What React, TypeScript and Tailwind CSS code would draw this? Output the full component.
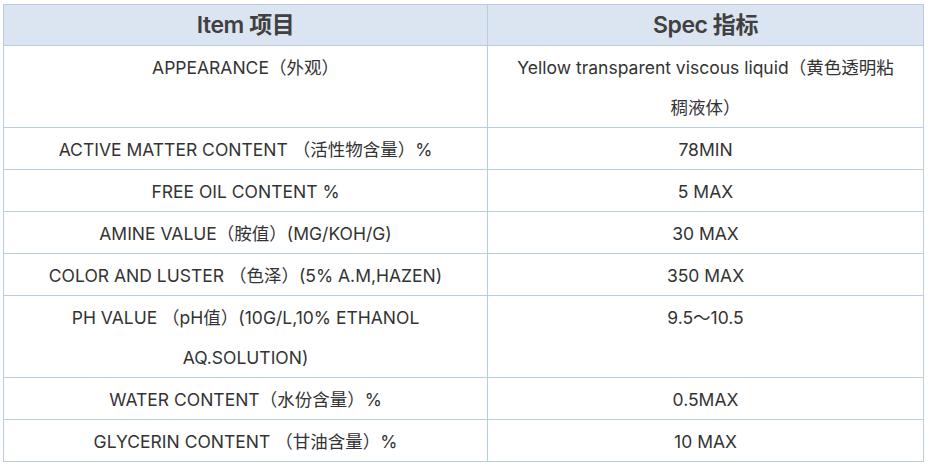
const rows: { item: React.ReactNode; spec: React.ReactNode }[] = [
  {
    item: "APPEARANCE（外观）",
    spec: (
      <>
        Yellow transparent viscous liquid（黄色透明粘
        <br />
        稠液体）
      </>
    ),
  },
  { item: "ACTIVE MATTER CONTENT （活性物含量）%", spec: "78MIN" },
  { item: "FREE OIL CONTENT %", spec: "5 MAX" },
  { item: "AMINE VALUE（胺值）(MG/KOH/G)", spec: "30 MAX" },
  { item: "COLOR AND LUSTER （色泽）(5% A.M,HAZEN)", spec: "350 MAX" },
  {
    item: (
      <>
        PH VALUE （pH值）(10G/L,10% ETHANOL
        <br />
        AQ.SOLUTION)
      </>
    ),
    spec: "9.5～10.5",
  },
  { item: "WATER CONTENT（水份含量）%", spec: "0.5MAX" },
  { item: "GLYCERIN CONTENT （甘油含量）%", spec: "10 MAX" },
];

export default function App() {
  return (
    <div className="h-[467px] w-[929px] overflow-hidden bg-white pl-[3px] pt-[4px] font-['Inter','Noto_Sans_CJK_SC',sans-serif] text-[#333]">
      <table className="w-[921px] table-fixed border-collapse">
        <colgroup>
          <col className="w-[484px]" />
          <col />
        </colgroup>
        <thead>
          <tr className="bg-[#dbe5f1]">
            <th className="h-[41px] border border-[#b8cce4] p-0 text-center align-middle text-[23px] font-semibold leading-[40px] tracking-[-0.02em] text-[#404040]">
              Item 项目
            </th>
            <th className="h-[41px] border border-[#b8cce4] p-0 text-center align-middle text-[23px] font-semibold leading-[40px] tracking-[-0.02em] text-[#404040]">
              Spec 指标
            </th>
          </tr>
        </thead>
        <tbody>
          {rows.map((r, i) => (
            <tr key={i}>
              <td className="border border-[#b8cce4] px-2 pt-[1px] pb-0 text-center align-top text-[17.5px] leading-[40px]">
                <span className="relative top-[1px]">{r.item}</span>
              </td>
              <td className="border border-[#b8cce4] px-2 pt-[1px] pb-0 text-center align-top text-[17.5px] leading-[40px]">
                <span className="relative top-[1px]">{r.spec}</span>
              </td>
            </tr>
          ))}
        </tbody>
      </table>
    </div>
  );
}
